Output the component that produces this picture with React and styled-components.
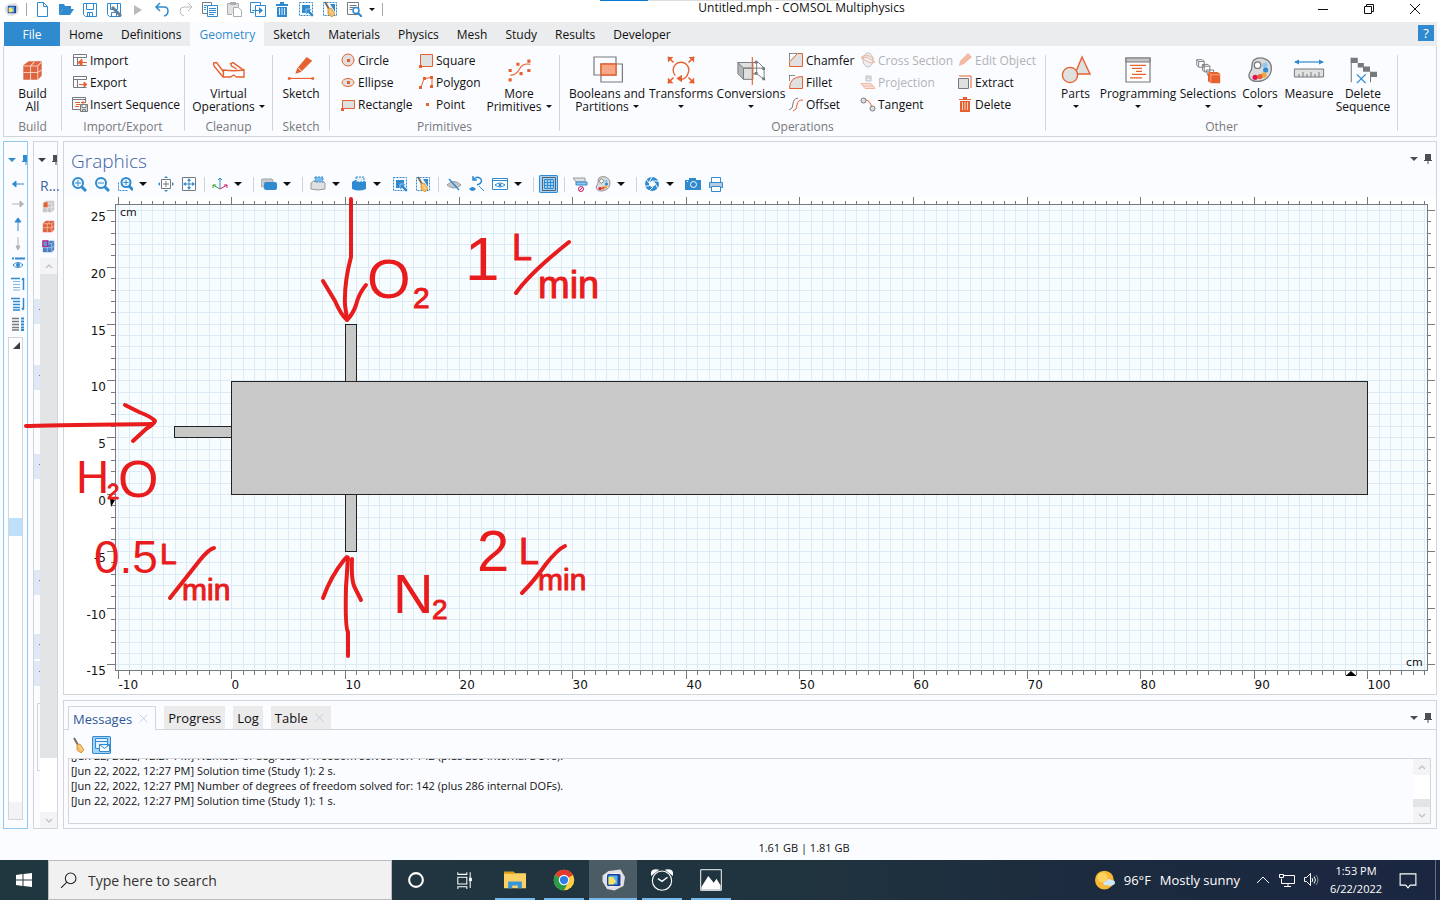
import React from 'react';
import styled, { createGlobalStyle } from 'styled-components';

const O = '#e7602f';
const G = '#77797d';
const L = '#dfe1e0';
const B = '#2f8ad0';

const range = (from, to) => Array.from({ length: to - from + 1 }, (_, i) => from + i);

const logo = (
  <>
    <path d="M1 5l4-3 8-1 3 5-1 6-6 3-5-1-3-5z" fill="#e2dfe2" />
    <path d="M3 4l9-1 2 8-8 2z" fill="#f4f2f4" />
    <rect x="4" y="4" width="9" height="8" rx="1" fill="#1d3f9c" />
    <rect x="5" y="5" width="6" height="6" fill="#56b4e8" />
    <path d="M5 6h3l2 3-2 2H5z" fill="#f7e463" />
  </>
);

const broom = (
  <>
    <path d="M3 1l4 7" stroke="#7d6a58" strokeWidth="2" />
    <path d="M6 8l3-1 4 6-3 3-4-3z" fill="#f5bd68" stroke="#dd9a3c" />
    <path d="M8 9l3 4" stroke="#fbe0ae" />
  </>
);

const cube = (front, line = '#f8cdb9') => (
  <>
    <path d="M1 4l4-3h10v11l-3 3H1z" fill={front} />
    <path d="M1 4.500h11v11M12 4.500l3-3M1 9.500h11l3-2M6.500 4.500v11M6.500 4.500l3-3" stroke={line} strokeWidth=".8" fill="none" />
  </>
);

const magnifier = (
  <>
    <circle cx="7" cy="7" r="5" stroke={B} strokeWidth="2" fill="#f2f9fe" />
    <path d="M10.500 10.500l4.500 4.500" stroke={B} strokeWidth="3" />
  </>
);

const palette = (
  <>
    <path d="M4 2c4-3 11-1 11 5 0 5-4 8-9 8-4 0-6-3-4-6 2-2 0-4 2-7z" fill="#dadbdb" stroke="#77797d" strokeWidth=".8" />
    <circle cx="6.500" cy="5" r="2" fill="#fff" stroke="#77797d" strokeWidth=".8" />
    <circle cx="11" cy="5" r="1.600" fill="#8cc8f2" />
    <circle cx="11.500" cy="8" r="1.600" fill={B} />
    <circle cx="10.500" cy="11" r="1.600" fill="#f2a33a" />
    <circle cx="8" cy="12" r="1.600" fill={O} />
    <circle cx="5" cy="12.500" r="1.600" fill="#e0144c" />
  </>
);

const windowFrame = (
  <path d="M1.500 2.500h13M1.500 2.500v11h13M1.500 5.500h13M5.500 5.500v8M14.500 2.500v3" stroke={G} fill="none" />
);

// every glyph is drawn on a 16 unit square
const icons = {
  logo,
  broom,
  palette,
  newFile: <path d="M3.500 1.500h6l4 4v10h-10zM9.500 1.500v4h4" stroke={B} fill="#fff" />,
  open: (
    <>
      <path d="M1 14V3h5l1 2h6v3H5z" fill={B} />
      <path d="M5 8h11l-4 6H1z" fill={B} />
    </>
  ),
  save: <path d="M1.500 2.500h13v13h-11l-2-2zM4.500 2.500v6h7v-6M5.500 15.500v-4h5v4M7.500 12v3" stroke={B} fill="#fff" />,
  saveAs: (
    <>
      <path d="M1.500 2.500h13v13h-11l-2-2zM4.500 2.500v6h7v-6M5.500 15.500v-4h5v4" stroke={B} fill="#fff" />
      <path d="M6 6l9 9" stroke={G} strokeWidth="3" />
      <path d="M7 6l7 7" stroke={B} />
    </>
  ),
  play: <path d="M4 4l8 5-8 5z" fill="#b9babc" />,
  undo: <path d="M6 2L2 6l4 4M2 6h8q4 0 4 4t-4 5" stroke={B} strokeWidth="1.500" fill="none" />,
  redo: <path d="M10 2l4 4-4 4M14 6H6q-4 0-4 4t4 5" stroke="#b9bbbe" fill="none" />,
  copy: (
    <>
      <path d="M5 12.500H.500v-11h9V4" stroke={G} fill="#fff" />
      <path d="M5.500 4.500h10v11h-10zM7 7.500h7M7 9.500h7M7 11.500h7M7 13.500h5M2 4.500h3M2 6.500h2M2 8.500h2" stroke={B} fill="#fff" />
    </>
  ),
  paste: (
    <>
      <path d="M6 13.500H1.500v-11h11V6" stroke="#aaacaf" fill="#e0e1e3" />
      <path d="M4 1h6v3H4z" fill="#aaacaf" />
      <path d="M7.500 6.500h5l3 3v6h-8z" stroke="#aaacaf" fill="#fff" />
    </>
  ),
  duplicate: (
    <>
      <path d="M4 11.500H.500v-10h10V4" stroke={B} fill="none" />
      <path d="M5.500 4.500h10v11h-10z" stroke={B} fill="#fff" />
      <path d="M2 9h7V6l4 3.500L9 13v-3H2z" fill={B} />
    </>
  ),
  trash: (
    <>
      <path d="M2 3h12v2H2zM6 1h4v2H6zM3 6h10v10H3z" fill={B} />
      <path d="M5.500 7v7M8 7v7M10.500 7v7" stroke="#d7ebf8" />
    </>
  ),
  select: (
    <>
      <path d="M1.500 1.500h13v13h-13z" stroke={B} strokeDasharray="2 1" fill="none" />
      <path d="M4 4h8v8H4z" fill={B} />
      <path d="M8 8h6l-2 2 4 4-2 2-4-4-2 2z" fill={B} stroke="#fff" strokeWidth=".5" />
    </>
  ),
  deselect: (
    <>
      <path d="M1.500 1.500h13v13h-13z" stroke={B} strokeDasharray="2 1" fill="none" />
      <path d="M8 3h5v8z" fill={B} />
      {broom}
    </>
  ),
  findDoc: (
    <>
      <path d="M1.500 1.500h11v12h-11zM3.500 4.500h7M3.500 6.500h5M3.500 8.500h3" stroke={G} fill="#fff" />
      <circle cx="10" cy="9.500" r="3" stroke={B} strokeWidth="1.500" fill="#fff" />
      <path d="M12 12l4 4" stroke={B} strokeWidth="2" />
    </>
  ),
  minimize: <path d="M3 8.500h10" stroke="#111" />,
  restore: <path d="M3.500 5.500h7v7h-7zM5.500 5.500v-2h7v7h-2" stroke="#111" fill="none" />,
  close: <path d="M3 3l10 10M13 3L3 13" stroke="#111" fill="none" />,
  closeTab: <path d="M3 3l9 9M12 3l-9 9" stroke="#c3c8d6" fill="none" />,
  // ribbon
  build: cube('#dd6440'),
  import: (
    <>
      {windowFrame}
      <path d="M9 10.500h6M10 7l-4 3.500 4 3.500z" stroke={O} fill={O} />
    </>
  ),
  export: (
    <>
      {windowFrame}
      <path d="M7 10.500h7M12 8l3 2.500-3 2.500z" stroke={O} fill={O} />
    </>
  ),
  sequence: (
    <>
      <path d="M8 13.500H.500v-12h13V6M.500 3.500h13" stroke={G} fill="none" />
      <path d="M3 6.500h5M4 8.500h4M3 10.500h4M9 6.500h5M11 5v3" stroke={O} />
      <path d="M8.500 8.500h7v7h-7zM10 8.500v3h4v-3M10.500 15.500v-2h3v2" stroke={G} fill={L} />
    </>
  ),
  glasses: (
    <>
      <path d="M5 11.500L.500 6l-.200-1.500 1.500-.200L5.300 9" stroke={O} strokeWidth=".7" fill="none" />
      <path d="M15.500 8.200L10 4.300l-1.200.5.500 1.200 2.500 1.500" stroke={O} strokeWidth=".7" fill="none" />
      <path d="M5.200 8q5 .800 10.300 0v3.500h-3.700l-1.500-1-1.500 1H5.200z" stroke={O} strokeWidth=".7" fill="#fff" />
    </>
  ),
  sketch: (
    <>
      <path d="M5 10l1-3 5-6 3 2-6 6z" fill={O} />
      <path d="M6.300 6.800l2 1.700" stroke="#fbfcff" strokeWidth=".5" />
      <path d="M2 12.500h12" stroke={O} strokeWidth=".6" />
      <path d="M1 11.800h1.400v1.400H1zM13.600 11.800H15v1.400h-1.400z" fill={O} />
    </>
  ),
  circle: (
    <>
      <circle cx="8" cy="8" r="6" stroke={O} fill={L} />
      <path d="M7 7h3v3H7z" fill={O} />
    </>
  ),
  ellipse: (
    <>
      <ellipse cx="8" cy="8.500" rx="6" ry="4" stroke={O} fill={L} />
      <path d="M7 7h3v3H7z" fill={O} />
    </>
  ),
  rectangle: (
    <>
      <path d="M2.500 4.500h12v8h-12z" stroke={O} fill={L} />
      <path d="M1 12h3v3H1z" fill={O} />
    </>
  ),
  square: (
    <>
      <path d="M2.500 2.500h12v12h-12z" stroke={O} fill={L} />
      <path d="M1 13h3v3H1z" fill={O} />
    </>
  ),
  polygon: (
    <>
      <path d="M3 13.500l3-9 8-1v9" stroke={O} fill="none" />
      <path d="M1 12h3v3H1zM5 3h3v3H5zM12 2h3v3h-3zM12 11h3v3h-3z" fill={O} />
    </>
  ),
  point: <path d="M8 7h3v3H8z" fill={O} />,
  curve: (
    <>
      <path d="M2 11q4 0 6-4t7-3" stroke={O} strokeWidth=".7" fill="none" />
      <path d="M1 13h2v2H1zM1 7h2v2H1zM6 3h2v2H6zM8 9h2v2H8zM13 1h2v2h-2zM13 7h2v2h-2z" fill={O} />
    </>
  ),
  booleans: (
    <>
      <path d="M1.500 1.500h11v9h-11z" stroke={G} strokeWidth=".6" fill="none" />
      <path d="M5 5h10.700v9H5z" stroke={G} strokeWidth=".6" fill="none" />
      <path d="M5 5h7.500v5.500H5z" stroke={O} strokeWidth=".7" fill="#f6a886" />
    </>
  ),
  transforms: (
    <>
      <path d="M5 11a4.200 4.200 0 1 1 6 0M8 13q3 0 4-4" stroke={O} strokeWidth=".7" fill="none" />
      <path d="M5.500 12.500l3-2v4zM1 1h3L1 4zM15 1v3l-3-3zM1 15v-3l3 3zM15 15h-3l3-3z" fill={O} />
      <path d="M1 1l3 3M15 1l-3 3M1 15l3-3M15 15l-3-3" stroke={O} strokeWidth=".8" />
    </>
  ),
  conversions: (
    <>
      <path d="M1 4l3 3v6l-3-3z" fill="#b5b6b8" stroke={G} strokeWidth=".5" />
      <path d="M4 7h5v6H4zM1 4h8v3H4z" fill={L} stroke={G} strokeWidth=".5" />
      <path d="M9 4h3l3 3v6l-4-3H9M11 4v6M9 7h6" stroke={G} strokeWidth=".5" fill="none" />
      <path d="M10 3h1.500v1.500H10zM14 6.500h1.500V8H14zM14 12h1.500v1.500H14zM10 9h1.500v1.500H10z" fill={G} />
      <path d="M8.700 1v15" stroke={O} strokeWidth=".6" />
    </>
  ),
  chamfer: (
    <>
      <path d="M1.500 1.500h8M1.500 1.500v7" stroke="#222" strokeDasharray="1 1" />
      <path d="M1.500 14.500V10l8-8.500h5v13z" stroke={O} fill={L} />
    </>
  ),
  fillet: (
    <>
      <path d="M1.500 1.500h6M1.500 1.500v6" stroke="#222" strokeDasharray="1 1" />
      <path d="M1.500 14.500q0-12 13-12v12z" stroke={O} fill={L} />
    </>
  ),
  offset: (
    <>
      <path d="M1 14q4-1 4-6t5-6" stroke={G} fill="none" />
      <path d="M5 15q4-1 4-6t6-5" stroke={O} fill="none" />
    </>
  ),
  crossSection: (
    <g opacity=".45">
      <ellipse cx="8" cy="8" rx="5" ry="7" stroke={G} fill={L} />
      <path d="M1 6l9 5 5-1-8-5zM1 5q7-4 13 2" stroke={O} fill="none" />
    </g>
  ),
  projection: (
    <g opacity=".45">
      <path d="M6 2h5v5H6zM6 4h5" stroke={G} fill={L} />
      <path d="M1 9.500h10l4 5H5zM3 12h10" stroke={O} fill="#f6c5b0" />
    </g>
  ),
  tangent: (
    <>
      <path d="M4 4q6-1 8 8" stroke={O} fill="none" />
      <circle cx="3.500" cy="4.500" r="2.500" stroke={G} fill={L} />
      <circle cx="12.500" cy="12.500" r="2.500" stroke={G} fill={L} />
    </>
  ),
  editObject: <path d="M2 14l1-5 8-8 4 4-8 7z" fill="#f4b9a2" />,
  extract: (
    <>
      <path d="M2 2h12v12" stroke={O} fill="none" />
      <path d="M1.500 4.500h10v10h-10z" stroke={G} fill={L} />
    </>
  ),
  delete: (
    <>
      <path d="M2 3h12v1H2zM6 1h4v2H6zM3 5h10v11H3z" fill={O} />
      <path d="M5.500 6v8M8 6v8M10.500 6v8" stroke="#f9d2c2" />
    </>
  ),
  parts: (
    <>
      <path d="M11 1.500l4 8.500H7.500z" stroke={O} strokeWidth=".7" fill={L} />
      <circle cx="5" cy="10.500" r="3.800" stroke={O} strokeWidth=".7" fill={L} />
    </>
  ),
  programming: (
    <>
      <path d="M2 2h12v12H2z" stroke={G} strokeWidth=".6" fill="#fff" />
      <path d="M2 2h12v2H2z" fill="#c6c2c6" stroke={G} strokeWidth=".6" />
      <path d="M4 5.700h6M5 7.200h5M7 8.700h3M5 10.200h7M4 11.900h6M8 5.700h4" stroke={O} strokeWidth=".6" />
    </>
  ),
  selections: (
    <>
      <path d="M2 2.500h3l1 1v3H3l-1-1zM5 5h3l1 1v3H6l-1-1zM2 2.500l1 1h3M5 5l1 1h3M3 3.500v3M6 6v3M7 8h4v3H8z" stroke={G} strokeWidth=".5" fill="#fff" />
      <path d="M8 9h5l1.500 1v5H9.500L8 14z" fill={O} />
      <path d="M8 9l1.500 1.500h5M9.500 10.500V15" stroke="#f6a886" strokeWidth=".5" fill="none" />
    </>
  ),
  measure: (
    <>
      <path d="M1 4h14" stroke={B} strokeWidth=".6" />
      <path d="M.500 4L3 2.700v2.600zM15.500 4L13 2.700v2.600z" fill={B} />
      <path d="M.700 7.500h14.600v4H.700z" fill={L} stroke={G} strokeWidth=".5" />
      <path d="M3 11.500V10M5 11.500V9M7 11.500V10M9 11.500V9M11 11.500V10M13 11.500V9" stroke={G} strokeWidth=".5" />
    </>
  ),
  deleteSequence: (
    <>
      <path d="M1 1h4v3H1zM5 4h3.500v2.500H5zM8 6h4v3H8zM12 9h4v3h-4z" fill={G} />
      <path d="M1.300 1v14M12.300 9v6" stroke={G} strokeWidth=".6" />
      <path d="M4.500 10.500l5 5M9.500 10.500l-5 5" stroke={B} strokeWidth=".8" />
    </>
  ),
  // graphics toolbar
  zoomIn: (
    <>
      {magnifier}
      <path d="M7 4v6M4 7h6" stroke={B} />
    </>
  ),
  zoomOut: (
    <>
      {magnifier}
      <path d="M4 7h6" stroke={B} />
    </>
  ),
  zoomBox: (
    <>
      <path d="M1.500 6.500v8h9" stroke={B} strokeDasharray="2 1" fill="none" />
      <circle cx="9" cy="6.500" r="4.500" stroke={B} strokeWidth="2" fill="#f2f9fe" />
      <path d="M12 10l4 4" stroke={B} strokeWidth="3" />
      <path d="M9 4v5M6.500 6.500h5" stroke={B} />
    </>
  ),
  extents: (
    <>
      <path d="M3.500 3.500h9v9h-9z" stroke={G} fill="#fff" />
      <path d="M8 5v6M5 8h6" stroke={G} />
      <path d="M6 2l2-2 2 2zM6 14l2 2 2-2zM2 6L0 8l2 2zM14 6l2 2-2 2z" fill={B} />
    </>
  ),
  fit: (
    <>
      <path d="M1.500 1.500h13v13h-13z" stroke={G} fill="#fff" />
      <path d="M8 5v6M5 8h6" stroke={B} />
      <path d="M6 5l2-3 2 3zM6 11l2 3 2-3zM5 6L2 8l3 2zM11 6l3 2-3 2z" fill={B} />
    </>
  ),
  axes: (
    <>
      <path d="M8 13V2M6 4l2-2 2 2" stroke={B} fill="none" />
      <path d="M8 13L1 9M1 12V9h3" stroke="#37a13d" fill="none" />
      <path d="M8 13l7-4M12 9h3v3" stroke="#d01a6c" fill="none" />
    </>
  ),
  scene: (
    <>
      <rect x="0" y="3" width="12" height="8" rx="2" fill="#c9cbce" stroke="#9fa2a5" />
      <rect x="3" y="6" width="13" height="8" rx="2" fill={B} />
    </>
  ),
  selectBox: (
    <>
      <path d="M1 7l3-2h8l3 2v6q-7 2-14 0z" fill={L} stroke="#999b9e" />
      <path d="M5 1h8v5H5z" fill="#7fbbe7" stroke={B} strokeDasharray="2 1" />
    </>
  ),
  selectFilled: (
    <>
      <path d="M1 6l3-2h8l3 2v7q-7 3-14 0z" fill={B} />
      <path d="M5 1h8v5H5z" fill="#e3edf5" stroke={B} strokeDasharray="2 1" />
    </>
  ),
  hide: (
    <>
      <path d="M1 9q7-7 14 0-7 6-14 0z" fill="#c5c7c9" stroke="#97999c" />
      <path d="M3 3l10 11" stroke={B} strokeWidth="1.500" />
    </>
  ),
  resetHidden: (
    <>
      <path d="M4 4q4-5 8-1 2 4-4 6M4 0v4h4" stroke={B} strokeWidth="1.500" fill="none" />
      <path d="M0 13q3.500-4 7 0-3.500 4-7 0z" fill={B} />
      <path d="M10 10l5 5" stroke={B} />
    </>
  ),
  view: (
    <>
      <path d="M.500 2.500h15v11H.500zM.500 4.500h15" stroke={B} fill="#fff" />
      <path d="M3 9q5-4 10 0-5 4-10 0z" stroke={B} fill="#fff" />
      <circle cx="8" cy="9" r="1.500" fill={B} />
    </>
  ),
  grid: (
    <>
      <path d="M1.500 1.500h13v13h-13z" stroke="#55606a" fill="#a7d2f6" />
      <path d="M3.500 3.500h9v9h-9zM6.500 3v9M9.500 3v9M3 6.500h10M3 9.500h10" stroke={B} fill="none" />
    </>
  ),
  clip: (
    <>
      <path d="M1 2h12v4H4z" fill={L} stroke="#999b9e" />
      <path d="M4 6h11v3H4z" fill="#8dc4ee" stroke={B} />
      <circle cx="9" cy="13" r="2.500" stroke="#d01a5c" fill="#fff" />
      <path d="M7 15l4-4" stroke="#d01a5c" />
    </>
  ),
  shutter: (
    <>
      <circle cx="8" cy="8" r="7" fill={B} />
      <path d="M8 5l3 1.500v3L8 11l-3-1.500v-3z" fill="#fff" />
      <path d="M5 6.500L8 1M8 5h7M11 7l3 6M9 11l-4 4M5 10H1M5 7L2 3" stroke="#fff" />
    </>
  ),
  camera: (
    <>
      <path d="M0 4h4V2h7v2h5v10H0z" fill={B} />
      <circle cx="8.500" cy="8.500" r="3" stroke="#fff" fill={B} />
      <path d="M2 5h1v1H2z" fill="#fff" />
    </>
  ),
  printer: (
    <>
      <path d="M3.500 1.500h9v5h-9z" stroke={B} fill="#fff" />
      <path d="M1.500 6.500h13v5h-13z" stroke={B} fill="#b8cbe0" />
      <path d="M3.500 10.500h9v5h-9z" stroke={B} fill="#fff" />
    </>
  ),
  // side panels
  left: <path d="M14 8H3M6 5L2.500 8 6 11z" stroke={B} fill={B} />,
  right: <path d="M2 8h11M10 5l3.500 3-3.500 3z" stroke="#b0b2b5" fill="#b0b2b5" />,
  up: <path d="M8 15V4M5 6l3-4 3 4z" stroke={B} fill={B} />,
  down: <path d="M8 1v11M6 10l2 4 2-4z" stroke="#b0b2b5" fill="#b0b2b5" />,
  show: (
    <>
      <path d="M2 2.500h2M5 2.500h10" stroke={B} strokeWidth="2" />
      <path d="M3 9q5-5 10 0-5 5-10 0z" stroke={B} fill="#fff" />
      <circle cx="8" cy="9" r="2" fill={B} />
    </>
  ),
  expand: (
    <>
      <path d="M1 2.500h9M13.500 14V2M12 4l1.500-2" stroke={B} strokeWidth="1.500" fill="none" />
      <path d="M3 5.500h7M3 8.500h7M3 11.500h7M3 14h7" stroke="#82b7e2" />
    </>
  ),
  collapse: (
    <path d="M1 2.500h9M3 5.500h7M3 8.500h7M3 11.500h7M3 14h7M13.500 2v11M12 12l1.500 2" stroke={B} strokeWidth="1.500" fill="none" />
  ),
  columns: (
    <>
      <path d="M2 2.500h7M2 5.500h7M2 8.500h7M2 11.500h7M2 14h7" stroke={G} strokeWidth="1.500" />
      <path d="M11 2.500h3M11 5.500h3M11 8.500h3M11 11.500h3M11 14h3" stroke={B} strokeWidth="2" />
    </>
  ),
  cubeGrey: (
    <>
      {cube('#c9c6c5', '#f5f3f2')}
      <path d="M2 3h5v6H2z" fill={O} />
    </>
  ),
  cubeBlue: (
    <>
      {cube('#4a7fc4', '#c5d9f2')}
      <path d="M1 1h6v7H1z" stroke="#b8238f" strokeWidth="1.500" fill="#5f92d0" />
    </>
  ),
  pin: <path d="M5 3h6v6H5zM4 9h8v1H4zM7.500 10h1v3h-1z" fill="#4d4f52" />,
  pinBlue: <path d="M5 3h6v6H5zM4 9h8v1H4zM7.500 10h1v3h-1z" fill={B} />,
  chevronUp: <path d="M5 10l3-3 3 3" stroke="#c3c4c7" strokeWidth="1.500" fill="none" />,
  chevronDown: <path d="M5 7l3 3 3-3" stroke="#c3c4c7" strokeWidth="1.500" fill="none" />,
  mail: (
    <>
      <path d="M1.500 1.500h12v10h-12zM1.500 4.500h12" stroke={B} fill="#e4f2fd" />
      <path d="M5.500 7.500h10v7h-10zM5.500 7.500l5 4 5-4" stroke={B} fill="#fff" />
    </>
  ),
  // taskbar
  windows: <path d="M0 3l6.500-1v5.500H0zM7.500 2L16 1v6.500H7.500zM0 8.500h6.500V14L0 13zM7.500 8.500H16V15l-8.500-1z" fill="#fff" />,
  search: (
    <>
      <circle cx="10" cy="6" r="5" stroke="#222" fill="none" />
      <path d="M6.500 9.500L1 15" stroke="#222" />
    </>
  ),
  cortana: <circle cx="8" cy="8" r="5" stroke="#fff" strokeWidth="1.500" fill="none" />,
  taskView: (
    <>
      <path d="M2.500 5.500h8v6h-8zM2.500 1v2h8V1M2.500 16v-2h8v2M13.500 1v14" stroke="#fff" strokeWidth=".9" fill="none" />
      <path d="M12.500 6h2.500v3h-2.500z" fill="#fff" />
    </>
  ),
  folder: (
    <>
      <path d="M0 2h7l1 1h8v11H0z" fill="#fdd262" />
      <path d="M0 2h7l1 1.500H0z" fill="#dc9b10" />
      <path d="M3 14V9h10v5h-3v-2H6v2z" fill="#3796dc" />
    </>
  ),
  chrome: (
    <>
      <circle cx="8" cy="8" r="7.500" fill="#ffce43" />
      <path d="M8 8L1.500 4.300A7.500 7.500 0 0 1 14.500 4.300z" fill="#e33b2e" />
      <path d="M8 8L1.500 4.300A7.500 7.500 0 0 0 8 15.500L11.300 9.500z" fill="#2a9b48" />
      <circle cx="8" cy="8" r="3.800" fill="#fff" />
      <circle cx="8" cy="8" r="3" fill="#2f7de8" />
    </>
  ),
  alarm: (
    <>
      <circle cx="8" cy="8.500" r="7" stroke="#fff" strokeWidth=".8" fill="none" />
      <path d="M0 5q-1-6 6-4.500zM16 5q1-6-6-4.500z" fill="#fff" />
      <path d="M5 7l3 2 4-3" stroke="#fff" fill="none" />
    </>
  ),
  photos: (
    <>
      <path d="M.500.500h15v15H.500z" stroke="#fff" strokeWidth=".7" fill="none" />
      <path d="M1 13l5-8 4 5 2-3 3 5v3H1z" fill="#fff" />
    </>
  ),
  weather: (
    <>
      <circle cx="7.500" cy="8" r="7.500" fill="#f9b735" />
      <circle cx="6" cy="6" r="4" fill="#fdd45d" />
      <path d="M7 12q-1-3 2-3 1-3 4-1 3 0 3 2t-3 2.500z" fill="#cfe7fa" />
    </>
  ),
  trayUp: <path d="M2 11l6-6 6 6" stroke="#fff" fill="none" />,
  monitor: <path d="M5 3.500h10.500v8H2.500v-5M9 11.500v3M5 14.500h7M.500 2.500h4v3h-4z" stroke="#fff" fill="none" />,
  speaker: (
    <>
      <path d="M1.500 5.500h2l4-4v12l-4-4h-2z" stroke="#fff" fill="none" />
      <path d="M9 6q1.500 2 0 4M11 4.500q3 3.500 0 7" stroke="#fff" fill="none" />
      <path d="M13 3q4 5 0 10" stroke="#8a93a3" fill="none" />
    </>
  ),
  notification: <path d="M1 2.500h14v10h-5l-2 2.500-2-2.500H1z" stroke="#fff" fill="none" />,
};

const Icon = ({ name, size = 16 }) => (
  <svg width={size} height={size} viewBox="0 0 16 16" fill="none" aria-hidden="true">
    {icons[name]}
  </svg>
);

const quickActions = [
  ['newFile', 'New'],
  ['open', 'Open'],
  ['save', 'Save'],
  ['saveAs', 'Save as'],
  ['play', 'Run'],
  ['undo', 'Undo'],
  ['redo', 'Redo'],
  ['copy', 'Copy'],
  ['paste', 'Paste'],
  ['duplicate', 'Duplicate'],
  ['trash', 'Delete'],
  ['select', 'Select all'],
  ['deselect', 'Clear selection'],
  ['findDoc', 'Find'],
];

const tabs = ['Home', 'Definitions', 'Geometry', 'Sketch', 'Materials', 'Physics', 'Mesh', 'Study', 'Results', 'Developer'];

const ribbon = [
  { title: 'Build', width: 58, items: [{ icon: 'build', lines: ['Build', 'All'], width: 57, size: 21 }] },
  {
    title: 'Import/Export',
    width: 123,
    pad: 10,
    items: [
      {
        width: 108,
        rows: [
          ['import', 'Import'],
          ['export', 'Export'],
          ['sequence', 'Insert Sequence'],
        ],
      },
    ],
  },
  { title: 'Cleanup', width: 88, items: [{ icon: 'glasses', lines: ['Virtual', 'Operations'], width: 87, menu: true }] },
  { title: 'Sketch', width: 57, items: [{ icon: 'sketch', lines: ['Sketch'], width: 56, size: 30 }] },
  {
    title: 'Primitives',
    width: 230,
    pad: 10,
    items: [
      {
        width: 78,
        rows: [
          ['circle', 'Circle'],
          ['ellipse', 'Ellipse'],
          ['rectangle', 'Rectangle'],
        ],
      },
      {
        width: 66,
        rows: [
          ['square', 'Square'],
          ['polygon', 'Polygon'],
          ['point', 'Point'],
        ],
      },
      { icon: 'curve', lines: ['More', 'Primitives'], width: 70, menu: true, size: 25 },
    ],
  },
  {
    title: 'Operations',
    width: 486,
    pad: 6,
    items: [
      { icon: 'booleans', lines: ['Booleans and', 'Partitions'], width: 82, menu: true },
      { icon: 'transforms', lines: ['Transforms', ''], width: 66, menu: true, size: 30 },
      { icon: 'conversions', lines: ['Conversions', ''], width: 74, menu: true, size: 30 },
      {
        width: 72,
        rows: [
          ['chamfer', 'Chamfer'],
          ['fillet', 'Fillet'],
          ['offset', 'Offset'],
        ],
      },
      {
        width: 97,
        rows: [
          ['crossSection', 'Cross Section', true],
          ['projection', 'Projection', true],
          ['tangent', 'Tangent'],
        ],
      },
      {
        width: 80,
        rows: [
          ['editObject', 'Edit Object', true],
          ['extract', 'Extract'],
          ['delete', 'Delete'],
        ],
      },
    ],
  },
  {
    title: 'Other',
    width: 352,
    pad: 3,
    items: [
      { icon: 'parts', lines: ['Parts', ''], width: 53, menu: true },
      { icon: 'programming', lines: ['Programming', ''], width: 72, menu: true, size: 32 },
      { icon: 'selections', lines: ['Selections', ''], width: 68, menu: true, size: 30 },
      { icon: 'palette', lines: ['Colors', ''], width: 36, menu: true, size: 26 },
      { icon: 'measure', lines: ['Measure'], width: 62 },
      { icon: 'deleteSequence', lines: ['Delete', 'Sequence'], width: 46, size: 28 },
    ],
  },
];

const graphicsTools = [
  'zoomIn', 'zoomOut', 'zoomBox', 'menu', 'extents', 'fit', 'sep',
  'axes', 'menu', 'sep',
  'scene', 'menu', 'sep',
  'selectBox', 'menu', 'selectFilled', 'menu', 'select', 'deselect', 'sep',
  'hide', 'resetHidden', 'view', 'menu', 'sep',
  'grid', 'sep',
  'clip', 'palette', 'menu', 'sep',
  'shutter', 'menu', 'camera', 'printer',
];

const treeTools = ['left', 'right', 'up', 'down', 'show', 'expand', 'collapse', 'columns'];

// collapsed settings sections: space above, height
const sections = [
  [41, 25],
  [41, 25],
  [64, 25],
  [91, 25],
  [39, 25],
  [2, 25],
];

const messages = [
  '[Jun 22, 2022, 12:27 PM] Number of degrees of freedom solved for: 142 (plus 286 internal DOFs).',
  '[Jun 22, 2022, 12:27 PM] Solution time (Study 1): 2 s.',
  '[Jun 22, 2022, 12:27 PM] Number of degrees of freedom solved for: 142 (plus 286 internal DOFs).',
  '[Jun 22, 2022, 12:27 PM] Solution time (Study 1): 1 s.',
];

const apps = [
  { name: 'File Explorer', icon: 'folder' },
  { name: 'Chrome', icon: 'chrome' },
  { name: 'COMSOL Multiphysics', icon: 'logo', active: true },
  { name: 'Clock', icon: 'alarm' },
  { name: 'Photos', icon: 'photos' },
];

const px = v => Math.round(231.4 + 11.36 * v) + 0.5;
const py = v => Math.round(494 - 11.36 * v) + 0.5;

const Plot = () => (
  <PlotSvg viewBox="64 197 1372 497" role="img" aria-label="Geometry plot">
    <rect x="115" y="205" width="1312" height="465" fill="#f7fdff" />
    <g stroke="#dbeaf5">
      {range(-10, 105).map(v => (
        <path key={v} d={`M${px(v)} 205V670`} />
      ))}
      {range(-15, 25).map(v => (
        <path key={v} d={`M116 ${py(v)}H1427`} />
      ))}
    </g>
    <g stroke="#77797c">
      {range(-10, 105).map(v => (
        <path key={v} d={v % 10 ? `M${px(v)} 201v3M${px(v)} 671v4` : `M${px(v)} 197v7M${px(v)} 671v8`} />
      ))}
      {range(-15, 25).map(v => (
        <path key={v} d={v % 5 ? `M111 ${py(v)}h4M1428 ${py(v)}h3` : `M107 ${py(v)}h8M1428 ${py(v)}h7`} />
      ))}
      <rect x="115.500" y="204.500" width="1312" height="466" fill="none" />
    </g>
    <PlotLabels>
      {range(-3, 5).map(v => (
        <text key={v} x="106" y={py(v * 5) + 10} textAnchor="end">
          {v * 5}
        </text>
      ))}
      {range(-1, 10).map(v => (
        <text key={v} x={px(v * 10)} y="689">
          {v * 10}
        </text>
      ))}
      <text className="unit" x="120" y="216">cm</text>
      <text className="unit" x="1406" y="666">cm</text>
    </PlotLabels>
    <path d="M1345 676q2-1 6-5 4 4 6 5zM110 498l5 2-4 7z" fill="#000" />
    <g fill="#c8c8c8" stroke="#222">
      <rect x="345.500" y="324.500" width="11" height="57" />
      <rect x="345.500" y="494.500" width="11" height="57" />
      <rect x="174.500" y="426.500" width="57" height="11" />
      <rect x="231.500" y="381.500" width="1136" height="113" />
    </g>
    <Ink>
      <path d="M351 199v58q-7 26-6 48l2 14" />
      <path d="M323 281l12 20q6 14 12 19 6-6 9-15 3-12 10-20" />
      <path d="M26 426q24-1 126-2" />
      <path d="M125 405l14 7q13 5 16 9-1 3-9 8l-13 12" />
      <path d="M348 656v-24q-3-4-2-45l2-29" />
      <path d="M323 598q8-22 21-38l3-3M352 559q-1 22 3 29l6 12" />
      <path d="M516 293q14-20 53-51" />
      <path d="M170 598q22-28 30-38 9-11 14-12" />
      <path d="M522 593q12-12 24-29 12-15 19-18" />
    </Ink>
    <InkText>
      <text x="367" y="298" fontSize="56">O</text>
      <text x="465" y="280" fontSize="62">1</text>
      <text x="76" y="493" fontSize="46">H</text>
      <text x="118" y="497" fontSize="52">O</text>
      <text x="94" y="573" fontSize="46">0.5</text>
      <text x="393" y="613" fontSize="56">N</text>
      <text x="477" y="571" fontSize="58">2</text>
    </InkText>
    <InkText $small>
      <text x="413" y="308" fontSize="30">2</text>
      <text x="512" y="260" fontSize="36">L</text>
      <text x="538" y="298" fontSize="38">min</text>
      <text x="107" y="499" fontSize="22">2</text>
      <text x="160" y="564" fontSize="30">L</text>
      <text x="182" y="600" fontSize="30">min</text>
      <text x="432" y="619" fontSize="28">2</text>
      <text x="519" y="564" fontSize="36">L</text>
      <text x="538" y="590" fontSize="30">min</text>
    </InkText>
  </PlotSvg>
);

const RibbonItem = ({ item }) => {
  if (item.rows) {
    return (
      <SmallColumn $width={item.width}>
        {item.rows.map(([icon, label, disabled]) => (
          <SmallButton key={label} disabled={disabled}>
            <Icon name={icon} />
            {label}
          </SmallButton>
        ))}
      </SmallColumn>
    );
  }

  return (
    <BigButton $width={item.width}>
      <BigIcon>
        <Icon name={item.icon} size={item.size || 32} />
      </BigIcon>
      {item.lines.map((line, i) => (
        <BigLine key={i}>
          {line}
          {item.menu && i === 1 && <Caret $size={3} />}
        </BigLine>
      ))}
    </BigButton>
  );
};

export default function App() {
  return (
    <Desktop>
      <GlobalStyle />
      <TitleBar>
        <ScreenShare />
        <AppMark>
          <Icon name="logo" size={15} />
        </AppMark>
        <TitleDivider />
        {quickActions.map(([icon, label]) => (
          <QuickButton key={icon} aria-label={label}>
            <Icon name={icon} />
          </QuickButton>
        ))}
        <QuickMenu aria-label="Customize toolbar">
          <Caret $size={3} />
        </QuickMenu>
        <TitleDivider />
        <Title>Untitled.mph - COMSOL Multiphysics</Title>
        <WindowButton aria-label="Minimize"><Icon name="minimize" /></WindowButton>
        <WindowButton aria-label="Restore"><Icon name="restore" /></WindowButton>
        <WindowButton aria-label="Close"><Icon name="close" /></WindowButton>
      </TitleBar>

      <TabBar>
        <FileTab>File</FileTab>
        {tabs.map(tab => (
          <RibbonTab key={tab} $active={tab === 'Geometry'}>
            {tab}
          </RibbonTab>
        ))}
        <HelpButton>?</HelpButton>
      </TabBar>

      <Ribbon>
        {ribbon.map(group => (
          <Group key={group.title} $width={group.width}>
            <GroupItems $pad={group.pad || 0}>
              {group.items.map((item, i) => (
                <RibbonItem key={i} item={item} />
              ))}
            </GroupItems>
            <GroupTitle>{group.title}</GroupTitle>
          </Group>
        ))}
      </Ribbon>

      <Workspace>
        <TreePanel>
          <SideHead>
            <Caret $size={4} $color={B} />
            <Icon name="pinBlue" />
          </SideHead>
          {treeTools.map(tool => (
            <TreeButton key={tool} aria-label={tool}>
              <Icon name={tool} />
            </TreeButton>
          ))}
          <TreeBox>
            <TreeArrow />
            <TreeSelection />
            <TreeEnd />
          </TreeBox>
        </TreePanel>

        <SettingsPanel>
          <SideHead>
            <Caret $size={4} $color="#3c3d40" />
            <Icon name="pin" />
          </SideHead>
          <SettingsTitle>R...</SettingsTitle>
          {['cubeGrey', 'build', 'cubeBlue'].map(tool => (
            <SettingsButton key={tool} aria-label={tool}>
              <Icon name={tool} size={13} />
            </SettingsButton>
          ))}
          <SettingsBody>
            <Sections>
              {sections.map(([gap, height], i) => (
                <Section key={i} $gap={gap} $height={height} />
              ))}
              <SectionFrame />
            </Sections>
            <Scrollbar>
              <ScrollButton aria-label="Scroll up"><Icon name="chevronUp" /></ScrollButton>
              <ScrollThumb />
              <ScrollTrack />
              <ScrollButton aria-label="Scroll down"><Icon name="chevronDown" /></ScrollButton>
            </Scrollbar>
          </SettingsBody>
        </SettingsPanel>

        <MainColumn>
          <GraphicsPanel>
            <PanelHead>
              <PanelTitle>Graphics</PanelTitle>
              <PanelControls />
            </PanelHead>
            <GraphicsToolbar>
              {graphicsTools.map((tool, i) => {
                if (tool === 'sep') return <ToolSeparator key={i} />;
                if (tool === 'menu') {
                  return (
                    <ToolMenu key={i} aria-label="Options">
                      <Caret $size={4} />
                    </ToolMenu>
                  );
                }
                return (
                  <Tool key={i} aria-label={tool} $on={tool === 'grid'}>
                    <Icon name={tool} />
                  </Tool>
                );
              })}
            </GraphicsToolbar>
            <Plot />
          </GraphicsPanel>

          <MessagesPanel>
            <MessageTabs>
              <MessageTab $active>
                Messages <Icon name="closeTab" size={14} />
              </MessageTab>
              <MessageTab>Progress</MessageTab>
              <MessageTab>Log</MessageTab>
              <MessageTab>
                Table <Icon name="closeTab" size={14} />
              </MessageTab>
              <PanelControls />
            </MessageTabs>
            <MessageTools>
              <Tool aria-label="Clear"><Icon name="broom" /></Tool>
              <Tool aria-label="Show on message" $on><Icon name="mail" /></Tool>
            </MessageTools>
            <MessageBox>
              <MessageList>
                {messages.map((message, i) => (
                  <p key={i}>{message}</p>
                ))}
              </MessageList>
              <Scrollbar>
                <ScrollButton aria-label="Scroll up"><Icon name="chevronUp" /></ScrollButton>
                <ScrollTrack />
                <ScrollStub />
                <ScrollButton aria-label="Scroll down"><Icon name="chevronDown" /></ScrollButton>
              </Scrollbar>
            </MessageBox>
          </MessagesPanel>
        </MainColumn>
      </Workspace>

      <StatusBar>1.61 GB | 1.81 GB</StatusBar>

      <Taskbar>
        <TaskButton aria-label="Start"><Icon name="windows" size={16} /></TaskButton>
        <SearchBox>
          <Icon name="search" size={17} />
          <input type="text" placeholder="Type here to search" aria-label="Search" />
        </SearchBox>
        <TaskButton aria-label="Cortana"><Icon name="cortana" size={22} /></TaskButton>
        <TaskButton aria-label="Task view"><Icon name="taskView" size={18} /></TaskButton>
        <TaskApps>
          {apps.map(app => (
            <TaskApp key={app.name} aria-label={app.name} $active={app.active}>
              <Icon name={app.icon} size={app.icon === 'logo' ? 24 : 22} />
            </TaskApp>
          ))}
        </TaskApps>
        <Weather>
          <Icon name="weather" size={20} />
          <span>96°F</span>
          <span>Mostly sunny</span>
        </Weather>
        <TrayButton aria-label="Hidden icons"><Icon name="trayUp" /></TrayButton>
        <TrayButton aria-label="Network"><Icon name="monitor" /></TrayButton>
        <TrayButton aria-label="Volume"><Icon name="speaker" /></TrayButton>
        <Clock>
          <span>1:53 PM</span>
          <span>6/22/2022</span>
        </Clock>
        <NotificationButton aria-label="Notifications"><Icon name="notification" size={18} /></NotificationButton>
      </Taskbar>
    </Desktop>
  );
}

const PanelControls = () => (
  <Controls>
    <Caret $size={4} $color="#4d4f52" />
    <Icon name="pin" />
  </Controls>
);

const GlobalStyle = createGlobalStyle`
  * {
    box-sizing: border-box;
  }

  body {
    margin: 0;
    background: #fbfcff;
    color: #111;
    font-family: 'Open Sans', 'Noto Sans', sans-serif;
    font-size: 12px;
  }

  button {
    display: flex;
    align-items: center;
    margin: 0;
    padding: 0;
    border: none;
    background: none;
    color: inherit;
    font: inherit;
    white-space: nowrap;
  }

  svg {
    display: block;
    flex-shrink: 0;
  }

  p {
    margin: 0;
  }
`;

const Desktop = styled.div`
  display: flex;
  flex-direction: column;
  height: 100vh;
  overflow: hidden;
`;

const Caret = styled.i`
  flex-shrink: 0;
  width: 0;
  height: 0;
  border: ${({ $size }) => $size}px solid transparent;
  border-top-color: ${({ $color = '#111' }) => $color};
  border-bottom: none;
`;

const TitleBar = styled.header`
  position: relative;
  display: flex;
  align-items: center;
  height: 22px;
  padding: 0 2px 4px 0;
  background: #fff;
`;

const ScreenShare = styled.div`
  position: absolute;
  top: 0;
  left: 600px;
  width: 240px;
  height: 1px;
  border-left: 48px solid #0a78d4;
  background: #dedede;
`;

const AppMark = styled.div`
  display: flex;
  justify-content: center;
  width: 22px;
`;

const TitleDivider = styled.div`
  width: 8px;
  height: 13px;
  background: linear-gradient(#a5a6a8, #a5a6a8) center / 1px 100% no-repeat;
`;

const QuickButton = styled.button`
  justify-content: center;
  width: 24px;
`;

const QuickMenu = styled.button`
  justify-content: center;
  width: 12px;
`;

const Title = styled.div`
  flex: 1;
  padding: 0 83px 2px 0;
  text-align: center;
  line-height: 16px;
`;

const WindowButton = styled.button`
  justify-content: center;
  width: 46px;
`;

const TabBar = styled.nav`
  display: flex;
  height: 24px;
  margin: 0 3px 0 4px;
  background: #ebecee;
`;

const RibbonTab = styled.button`
  padding: 0 9px;
  background: ${({ $active }) => ($active ? '#fbfcff' : 'none')};
  color: ${({ $active }) => ($active ? B : '#111')};
`;

const FileTab = styled(RibbonTab)`
  justify-content: center;
  width: 56px;
  background: ${B};
  color: #fff;
`;

const HelpButton = styled.button`
  justify-content: center;
  width: 16px;
  height: 16px;
  margin: 3px 3px 0 auto;
  background: ${B};
  color: #fff;
  font-size: 13px;
`;

const Ribbon = styled.div`
  display: flex;
  height: 91px;
  margin: 0 3px 0 3px;
  border: 1px solid #d4d5d9;
  border-top: none;
`;

const Group = styled.section`
  display: flex;
  flex-direction: column;
  flex-shrink: 0;
  width: ${({ $width }) => $width}px;
  height: 76px;
  margin-top: 9px;
  border-right: 1px solid #d4d5d9;
`;

const GroupItems = styled.div`
  display: flex;
  flex-shrink: 0;
  height: 64px;
  padding-left: ${({ $pad }) => $pad}px;
`;

const GroupTitle = styled.div`
  text-align: center;
  line-height: 16px;
  color: #77787b;
`;

const BigButton = styled.button`
  flex-direction: column;
  flex-shrink: 0;
  width: ${({ $width }) => $width}px;
  height: 60px;
`;

const BigIcon = styled.div`
  display: flex;
  align-items: center;
  height: 32px;
  margin: -1px 0 1px;
`;

const BigLine = styled.span`
  display: flex;
  align-items: center;
  gap: 4px;
  min-height: 13px;
  line-height: 13px;
`;

const SmallColumn = styled.div`
  flex-shrink: 0;
  width: ${({ $width }) => $width}px;
  margin-top: -6px;
`;

const SmallButton = styled.button`
  gap: 2px;
  height: 22px;

  &:disabled {
    color: #b1b2b6;
  }
`;

const Workspace = styled.main`
  display: flex;
  flex: 1;
  min-height: 0;
  gap: 5px;
  padding: 4px 3px 0;
`;

const SidePanel = styled.aside`
  display: flex;
  flex-direction: column;
  flex-shrink: 0;
  width: 25px;
  border: 1px solid #d4d5d9;
`;

const TreePanel = styled(SidePanel)`
  align-items: center;
  border-color: #91c8f3;
`;

const SettingsPanel = styled(SidePanel)`
  & > * {
    flex-shrink: 0;
  }
`;

const SideHead = styled.div`
  display: flex;
  align-items: center;
  align-self: stretch;
  gap: 2px;
  height: 32px;
  padding: 4px 0 0 4px;
  overflow: hidden;
`;

const TreeButton = styled.button`
  height: 20px;
  margin-left: 5px;
`;

const TreeBox = styled.div`
  display: flex;
  flex: 1;
  flex-direction: column;
  width: 15px;
  margin: 3px 0 8px;
  border: 1px solid #d4d5d9;
  background: #fff;
`;

const TreeArrow = styled.i`
  align-self: flex-end;
  margin: 4px 2px 0 0;
  border-left: 7px solid transparent;
  border-bottom: 7px solid #3c3d40;
`;

const TreeSelection = styled.div`
  height: 18px;
  margin: 169px 0 auto;
  background: #bfe0fc;
`;

const TreeEnd = styled.div`
  height: 17px;
  background: #f3f3f5;
`;

const SettingsTitle = styled.h2`
  margin: 0;
  padding: 2px 0 0 6px;
  color: #40639f;
  font-size: 14px;
  font-weight: 400;
  line-height: 20px;
`;

const SettingsButton = styled.button`
  height: 20px;
  margin-left: 8px;
`;

const SettingsBody = styled.div`
  display: flex;
  flex: 1;
  margin-top: 2px;
  overflow: hidden;
`;

const Sections = styled.div`
  width: 6px;
  overflow: hidden;
`;

const Section = styled.div`
  height: ${({ $height }) => $height}px;
  margin-top: ${({ $gap }) => $gap}px;
  background: linear-gradient(#6f7888, #6f7888) right 10px / 1px 1px no-repeat #dfe8f5;
`;

const SectionFrame = styled.div`
  width: 20px;
  height: 68px;
  margin: 17px 0 0 3px;
  border: 1px solid #d4d5d9;
`;

const Scrollbar = styled.div`
  display: flex;
  flex-direction: column;
  width: 17px;
  background: #fff;
`;

const ScrollButton = styled.button`
  justify-content: center;
  height: 16px;
  background: #f4f4f6;
`;

const ScrollThumb = styled.div`
  flex: 9;
  background: #e3e4e6;
`;

const ScrollTrack = styled.div`
  flex: 1;
`;

const ScrollStub = styled.div`
  height: 8px;
  background: #e3e4e6;
`;

const MainColumn = styled.div`
  display: flex;
  flex: 1;
  flex-direction: column;
  gap: 5px;
  min-width: 0;
`;

const Panel = styled.section`
  display: flex;
  flex-direction: column;
  border: 1px solid #d4d5d9;
`;

const GraphicsPanel = styled(Panel)`
  flex: 1;
  min-height: 0;
`;

const PanelHead = styled.div`
  display: flex;
  align-items: center;
  justify-content: space-between;
  height: 33px;
  padding-left: 7px;
`;

const PanelTitle = styled.h2`
  margin: 4px 0 0;
  color: #40639f;
  font-size: 19px;
  font-weight: 300;
  line-height: 28px;
`;

const Controls = styled.div`
  display: flex;
  align-items: center;
  gap: 2px;
  margin-left: auto;
`;

const GraphicsToolbar = styled.div`
  display: flex;
  align-items: center;
  height: 22px;
  padding: 0 0 4px 3px;
`;

const Tool = styled.button`
  justify-content: center;
  width: ${({ $on }) => ($on ? 19 : 23)}px;
  height: 18px;
  margin: ${({ $on }) => ($on ? '0 2px' : 0)};
  border-radius: 2px;
  background: ${({ $on }) => ($on ? '#a7d2f6' : 'none')};
  box-shadow: ${({ $on }) => ($on ? `inset 0 0 0 1px ${B}` : 'none')};
`;

const ToolMenu = styled.button`
  width: 18px;
  padding-left: 3px;
`;

const ToolSeparator = styled.div`
  width: 8px;
  height: 15px;
  background: linear-gradient(#d0d1d5, #d0d1d5) center / 1px 100% no-repeat;
`;

const PlotSvg = styled.svg`
  flex: 1;
  width: 100%;
  min-height: 0;
  overflow: visible;
  background: #fff;
`;

const PlotLabels = styled.g`
  fill: #111;
  font-family: 'DejaVu Sans', sans-serif;
  font-size: 12px;

  .unit {
    font-size: 11px;
  }
`;

const Ink = styled.g`
  fill: none;
  stroke: #e81c1c;
  stroke-width: 4px;
  stroke-linecap: round;
  stroke-linejoin: round;
`;

const InkText = styled.g`
  fill: #e81c1c;
  stroke: ${({ $small }) => ($small ? '#e81c1c' : 'none')};
  stroke-width: 1px;
  stroke-linejoin: round;
  font-family: 'Liberation Sans', sans-serif;
`;

const MessagesPanel = styled(Panel)`
  height: 129px;
`;

const MessageTabs = styled.div`
  display: flex;
  align-items: stretch;
  gap: 8px;
  height: 29px;
  padding: 5px 0 0 4px;
  border-bottom: 1px solid #d4d5d9;
`;

const MessageTab = styled.button`
  gap: 5px;
  height: ${({ $active }) => ($active ? 24 : 23)}px;
  padding: 0 4px;
  border: ${({ $active }) => ($active ? '1px solid #d4d5d9' : 'none')};
  border-bottom: none;
  background: ${({ $active }) => ($active ? '#fbfcff' : '#ebebec')};
  color: ${({ $active }) => ($active ? '#2f5796' : '#111')};
  font-size: 13px;
`;

const MessageTools = styled.div`
  display: flex;
  align-items: center;
  height: 28px;
  padding: 2px 0 0 3px;
`;

const MessageBox = styled.div`
  display: flex;
  flex: 1;
  min-height: 0;
  margin: 0 5px 4px 4px;
  border: 1px solid #d4d5d9;
`;

const MessageList = styled.div`
  display: flex;
  flex: 1;
  flex-direction: column;
  justify-content: flex-end;
  padding: 0 0 15px 2px;
  overflow: hidden;
  font-size: 11px;
  line-height: 15px;
`;

const StatusBar = styled.footer`
  height: 31px;
  padding: 11px 0 0 168px;
  text-align: center;
  font-size: 11px;
  line-height: 16px;
`;

const Taskbar = styled.footer`
  display: flex;
  height: 40px;
  background: linear-gradient(90deg, #213740, #20343f 55%, #1c2b3e 75%, #1b2741);
  color: #fff;
`;

const TaskButton = styled.button`
  justify-content: center;
  width: 48px;
`;

const SearchBox = styled.label`
  display: flex;
  align-items: center;
  gap: 11px;
  width: 344px;
  padding-left: 11px;
  border: 1px solid #bcbcbc;
  background: #f1f1f1;

  input {
    flex: 1;
    min-width: 0;
    padding: 0;
    border: none;
    outline: none;
    background: none;
    font-family: inherit;
    font-size: 14px;

    &::placeholder {
      color: #333;
      opacity: 1;
    }
  }
`;

const TaskApps = styled.div`
  display: flex;
  gap: 1px;
  margin-left: 3px;
`;

const TaskApp = styled.button`
  justify-content: center;
  width: 48px;
  background-color: ${({ $active }) => ($active ? '#4c5c65' : 'transparent')};
  background-image: linear-gradient(#76b9ed, #76b9ed);
  background-position: center bottom;
  background-repeat: no-repeat;
  background-size: ${({ $active }) => ($active ? 48 : 40)}px 2px;
`;

const Weather = styled.div`
  display: flex;
  align-items: center;
  gap: 9px;
  margin-left: auto;
  padding-right: 11px;
  font-size: 13px;
`;

const TrayButton = styled.button`
  justify-content: center;
  width: 24px;
`;

const Clock = styled.time`
  display: flex;
  flex-direction: column;
  justify-content: center;
  width: 66px;
  text-align: center;
  font-size: 11px;
  line-height: 18px;
`;

const NotificationButton = styled(TaskButton)`
  width: 47px;
  padding-right: 8px;
  margin-right: 4px;
  border-right: 1px solid #68717f;
`;
